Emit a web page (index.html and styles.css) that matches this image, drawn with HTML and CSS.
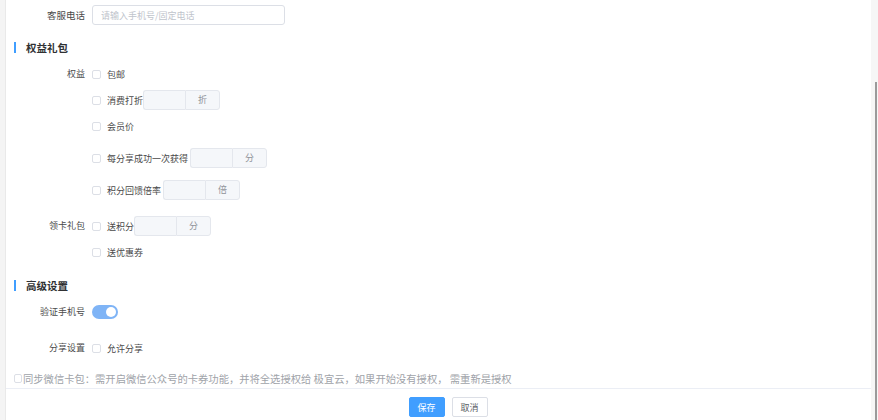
FILE: index.html
```html
<!DOCTYPE html>
<html lang="zh-CN">
<head>
  <meta charset="UTF-8" />
  <meta name="viewport" content="width=device-width, initial-scale=1.0"/>
  <title>会员卡设置</title>
  <link rel="stylesheet" href="styles.css">
</head>
<body>

  <div class="side"></div>

  <div class="panel">
    <div class="form">

      <!-- 客服电话 -->
      <div class="item item-phone">
        <div class="label label-phone">客服电话</div>
        <div class="field">
          <input class="text-input" type="text" placeholder="请输入手机号/固定电话">
        </div>
      </div>

      <!-- 权益礼包 -->
      <h3 class="section-title first">权益礼包</h3>

      <div class="item item-rights">
        <div class="label">权益</div>
        <div class="options">
          <div class="option"><span class="check"></span><span>包邮</span></div>
          <div class="option gap-6"><span class="check"></span><span>消费打折</span>
            <span class="group"><span class="num"></span><span class="addon">折</span></span>
          </div>
          <div class="option gap-6"><span class="check"></span><span>会员价</span></div>
          <div class="option gap-12"><span class="check"></span><span>每分享成功一次获得</span>
            <span class="group wide"><span class="num"></span><span class="addon">分</span></span>
          </div>
          <div class="option gap-12"><span class="check"></span><span>积分回馈倍率</span>
            <span class="group wide"><span class="num"></span><span class="addon">倍</span></span>
          </div>
        </div>
      </div>

      <div class="item item-gift">
        <div class="label">领卡礼包</div>
        <div class="options">
          <div class="option"><span class="check"></span><span>送积分</span>
            <span class="group"><span class="num"></span><span class="addon">分</span></span>
          </div>
          <div class="option gap-6"><span class="check"></span><span>送优惠券</span></div>
        </div>
      </div>

      <!-- 高级设置 -->
      <h3 class="section-title second">高级设置</h3>

      <div class="item item-verify">
        <div class="label">验证手机号</div>
        <div class="field">
          <span class="switch"><span class="knob"></span></span>
        </div>
      </div>

      <div class="item item-share">
        <div class="label">分享设置</div>
        <div class="options">
          <div class="option"><span class="check"></span><span>允许分享</span></div>
        </div>
      </div>
    </div>

    <div class="sync">
      <span class="check small"></span><span>同步微信卡包：需开启微信公众号的卡券功能，并将全选授权给 极宜云，如果开始没有授权， 需重新是授权</span>
    </div>

    <div class="footer">
      <button class="btn btn-primary">保存</button>
      <button class="btn">取消</button>
    </div>
  </div>

  <div class="scroll">
    <div class="thumb"></div>
  </div>

</body>
</html>
```

FILE: styles.css
```css
html, body {
  height: 100%;
}

body {
  margin: 0;
  display: flex;
  background: #f3f3f3;
  font-family: "Noto Sans CJK SC", "Liberation Sans", sans-serif;
  font-size: 9px;
  color: #4a4a4a;
  overflow: hidden;
}

.side {
  width: 5px;
  border-right: 1px solid #e9e9e9;
  background: #f4f4f4;
}

.panel {
  flex: 1;
  background: #fff;
  display: flex;
  flex-direction: column;
}

.form {
  padding-top: 5px;
}

/* ROWS */
.item {
  display: flex;
  align-items: flex-start;
}

.label {
  width: 79px;
  padding-right: 7px;
  text-align: right;
  line-height: 20px;
  height: 20px;
  color: #4a4a4a;
  box-sizing: content-box;
}

.label-phone {
  font-size: 9.5px;
}

.field {
  display: flex;
  align-items: center;
  height: 20px;
}

.text-input {
  width: 193px;
  height: 20px;
  box-sizing: border-box;
  border: 1px solid #dcdfe6;
  border-radius: 3px;
  padding: 0 8px;
  font: inherit;
  color: #606266;
  outline: none;
}

.text-input::placeholder {
  color: #c0c4cc;
}

.section-title {
  margin: 0;
  height: 11px;
  line-height: 11px;
  font-size: 10.5px;
  font-weight: bold;
  color: #303133;
  border-left: 2px solid #409eff;
  margin-left: 8px;
  padding-left: 10px;
}

.section-title.first { margin-top: 17px; }
.section-title.second { margin-top: 18px; }

.item-rights { margin-top: 11px; }
.item-gift { margin-top: 16px; }
.item-verify { margin-top: 11px; }
.item-share { margin-top: 16px; }

/* OPTIONS */
.options {
  display: flex;
  flex-direction: column;
}

.option {
  display: flex;
  align-items: center;
  height: 20px;
}

.gap-6 { margin-top: 6px; }
.gap-12 { margin-top: 12px; }

.check {
  width: 9px;
  height: 9px;
  box-sizing: border-box;
  border: 1px solid #dcdfe6;
  border-radius: 2px;
  background: #fff;
  margin-right: 6px;
  flex-shrink: 0;
}

.group {
  display: flex;
  height: 20px;
}

.group.wide {
  margin-left: 2px;
}

.num {
  width: 42px;
  box-sizing: border-box;
  background: #f5f7fa;
  border: 1px solid #e4e7ed;
  border-right: none;
  border-radius: 3px 0 0 3px;
}

.addon {
  width: 35px;
  box-sizing: border-box;
  background: #f5f7fa;
  border: 1px solid #e4e7ed;
  border-radius: 0 3px 3px 0;
  color: #909399;
  text-align: center;
  line-height: 18px;
}

/* SWITCH */
.switch {
  position: relative;
  width: 26px;
  height: 14px;
  border-radius: 7px;
  background: #7fb4f6;
}

.knob {
  position: absolute;
  top: 2px;
  right: 2px;
  width: 10px;
  height: 10px;
  border-radius: 50%;
  background: #fff;
}

/* SYNC */
.sync {
  display: flex;
  align-items: center;
  margin-top: 10px;
  height: 20px;
  padding-left: 8px;
  border-bottom: 1px solid #ebeef5;
  font-size: 10.3px;
  color: #a0a3a9;
}

.check.small {
  width: 8px;
  margin-right: 1px;
}

/* FOOTER */
.footer {
  display: flex;
  justify-content: center;
  gap: 7px;
  padding: 8px 0 0 19px;
}

.btn {
  width: 36px;
  height: 20px;
  padding: 0;
  font: inherit;
  font-size: 9px;
  color: #606266;
  background: #fff;
  border: 1px solid #dcdfe6;
  border-radius: 2px;
}

.btn-primary {
  background: #409eff;
  border-color: #409eff;
  color: #fff;
}

.scroll {
  width: 7px;
  background: #f6f6f6;
  padding-top: 82px;
  box-sizing: border-box;
}

.thumb {
  width: 2px;
  height: 100%;
  margin-left: 4px;
  background: #9a9a9a;
}
```
